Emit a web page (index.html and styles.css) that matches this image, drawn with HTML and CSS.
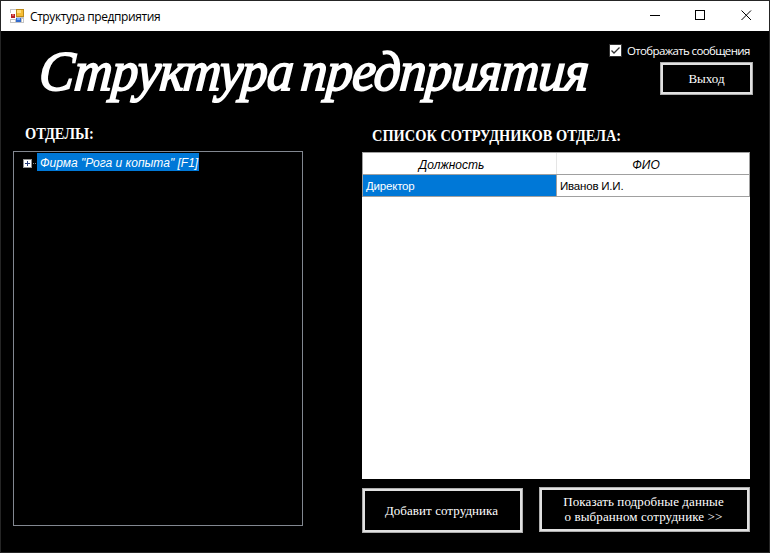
FILE: index.html
```html
<!DOCTYPE html>
<html lang="ru">
<head>
<meta charset="utf-8">
<title>Структура предприятия</title>
<link rel="stylesheet" href="styles.css">
</head>
<body>
<div class="window">
  <div class="titlebar">
    <svg class="app-icon" width="14" height="14" viewBox="0 0 14 14" shape-rendering="crispEdges">
      <path d="M0 0h14v14H0z" fill="#c4c4c4"/>
      <path d="M1 1h5v3H1zM1 11h4v2H1zM12 10h1v3h-1z" fill="#fff"/>
      <path d="M6 0h8v8H6z" fill="#bd8a17"/><path d="M7 1h6v6H7z" fill="#f5bd35"/><path d="M7 1h4v3H7z" fill="#ffdc78"/>
      <path d="M0 4h6v6H0z" fill="#fff"/><path d="M1 5h4v4H1z" fill="#b82024"/><path d="M2 5h2v2H2z" fill="#da6562"/>
      <path d="M6 9h5v4H6z" fill="#326bcf"/><path d="M7 9h3v2H7z" fill="#75a8ff"/>
    </svg>
    <span class="caption">Структура предприятия</span>
    <svg class="controls" width="138" height="30" viewBox="0 0 138 30" fill="none" stroke="#000">
      <path d="M18 14.500h10M63.500 9.500h9v9h-9z" shape-rendering="crispEdges"/>
      <path d="M109.500 9.500l9.500 9.500M119 9.500l-9.500 9.500"/>
    </svg>
  </div>
  <header class="header">
    <h1 class="title">Структура предприятия</h1>
    <div class="actions">
      <label class="check">
        <svg width="13" height="13" viewBox="0 0 13 13" fill="none"><path d="M.5.5h12v12H.5z" fill="#fff" stroke="#333"/><path d="M2.500 6.500l2.500 2.500 5.500-5.500" stroke="#333" stroke-width="1.300"/></svg>
        <span class="check-text">Отображать сообщения</span>
      </label>
      <button class="btn exit">Выход</button>
    </div>
  </header>
  <main class="main">
    <section class="departments">
      <h2 class="heading">ОТДЕЛЫ:</h2>
      <div class="tree">
        <div class="node">
          <svg width="14" height="9" viewBox="0 0 14 9" shape-rendering="crispEdges"><path d="M.5.5h8v8h-8z" fill="#fff" stroke="#919191"/><path d="M2 4.500h5M4.500 2v5" stroke="#263b76"/><path d="M10 4.500h1M12 4.500h1" stroke="#888"/></svg>
          <span class="node-label">Фирма "Рога и копыта" [F1]</span>
        </div>
      </div>
    </section>
    <section class="staff">
      <h2 class="heading staff-heading">СПИСОК СОТРУДНИКОВ ОТДЕЛА:</h2>
      <div class="list">
        <div class="row head"><span class="cell">Должность</span><span class="cell">ФИО</span></div>
        <div class="row"><span class="cell selected">Директор</span><span class="cell">Иванов И.И.</span></div>
      </div>
      <div class="buttons">
        <button class="btn add">Добавит сотрудника</button>
        <button class="btn details">Показать подробные данные<br>о выбранном сотруднике &gt;&gt;</button>
      </div>
    </section>
  </main>
</div>
</body>
</html>
```
FILE: styles.css
```css
* { box-sizing: border-box; }
body { margin: 0; background: #000; color: #fff; font: 12px "Open Sans", sans-serif; overflow: hidden; }
.window { width: 770px; height: 553px; border: 1px solid #252525; display: flex; flex-direction: column; }
.titlebar { height: 30px; background: #fff; color: #000; display: flex; align-items: center; padding-left: 9px; flex: none; }
.caption { margin-left: 6px; font-size: 12px; letter-spacing: -.42px; white-space: nowrap; }
.controls { margin-left: auto; margin-right: -1px; }
.header { display: flex; height: 89px; padding: 0 16px 0 37px; flex: none; }
.title { width: 560px; margin: 3px 0 0; font: italic 400 56px/74px "Liberation Serif", serif; -webkit-text-stroke: 1.8px #fff; white-space: nowrap; letter-spacing: -.6px; word-spacing: -5px; transform: scaleX(.94) skewX(-5deg); transform-origin: 0 57px; }
.actions { width: 155px; display: flex; flex-direction: column; align-items: flex-end; padding-top: 11px; }
.check { display: flex; align-items: center; gap: 5px; width: 144px; height: 16px; white-space: nowrap; }
.check svg { flex: none; }
.check-text { font-size: 11.5px; letter-spacing: -.64px; }
.btn { background: #000; color: #fff; border: 2px solid #e1e1e1; outline: 1px solid #adadad; padding: 0; font: 13px/15px "Liberation Serif", serif; margin: 1px; white-space: nowrap; }
.exit { width: 91px; height: 31px; margin: 5px 1px 0 0; }
.main { display: flex; justify-content: space-between; padding: 0 19px 0 12px; flex: 1; }
.departments { width: 290px; }
.staff { width: 388px; }
.heading { margin: 5px 0 0 12px; font: bold 16px/18px "Liberation Serif", serif; height: 26px; white-space: nowrap; transform: scaleX(.9); transform-origin: 0 0; }
.staff-heading { margin: 7px 0 0 10px; height: 25px; }
.tree { height: 375px; border: 1px solid #828790; padding: 1px 0 0 9px; }
.node { display: flex; align-items: center; height: 18px; }
.node svg { margin-top: 2px; }
.node-label { width: 162px; height: 18px; padding-left: 3px; background: #0078d7; font: italic 12px/20px "Liberation Sans", sans-serif; white-space: nowrap; }
.list { height: 327px; background: #fff; color: #000; }
.row { display: grid; grid-template-columns: 194px 192px; height: 22px; border: solid #a0a0a0; border-width: 0 1px 1px; }
.head { height: 23px; border-top-width: 1px; text-align: center; }
.cell { border-right: 1px solid #a0a0a0; padding-left: 3px; font: 11.5px/22px "Liberation Sans", sans-serif; letter-spacing: -.2px; height: 21px; }
.cell:last-child { border-right: 0; }
.head .cell { border-color: #e5e5e5; font: italic 12px/24px "Liberation Sans", sans-serif; letter-spacing: 0; }
.head .cell:first-child { padding-right: 19px; }
.head .cell:last-child { padding-right: 17px; }
.selected { background: #0078d7; color: #fff; }
.buttons { display: flex; justify-content: space-between; padding-top: 8px; }
.add { width: 159px; height: 43px; margin-top: 2px; padding-right: 2px; letter-spacing: .06px; }
.details { width: 209px; height: 43px; padding: 0 2px 2px 0; letter-spacing: .1px; }
```
